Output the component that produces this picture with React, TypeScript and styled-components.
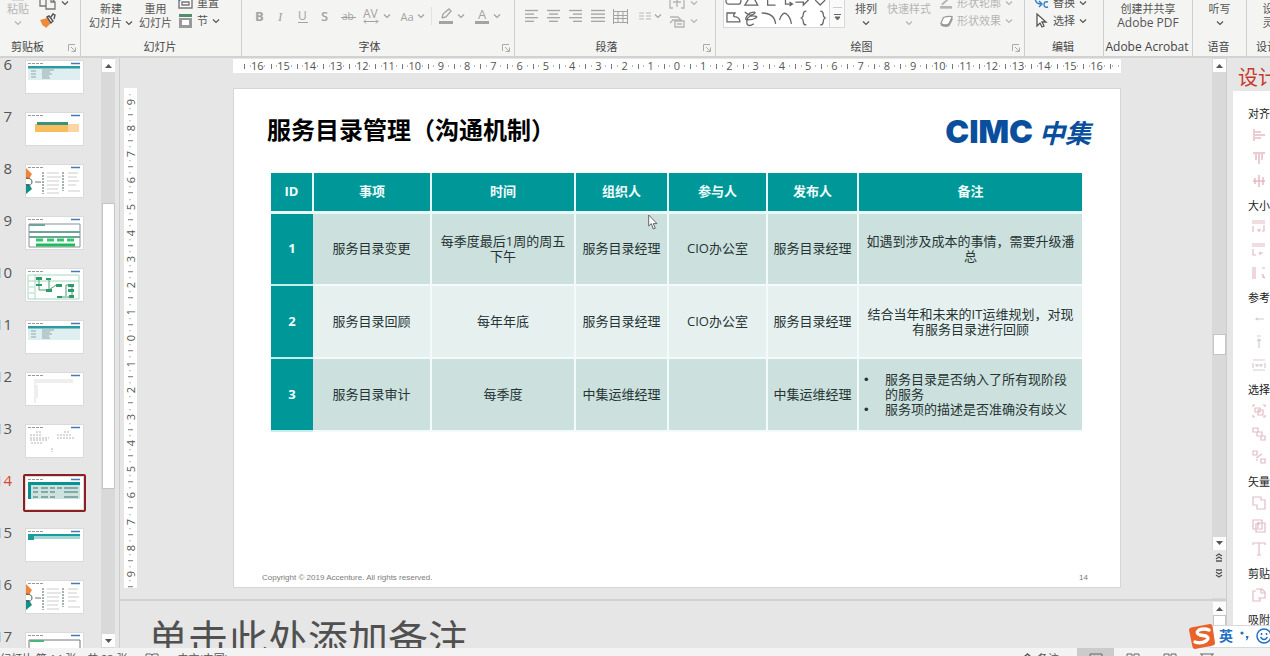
import React from "react";
import styled, { createGlobalStyle } from "styled-components";

const GlobalStyle = createGlobalStyle`
  * { box-sizing: border-box; }
  body {
    margin: 0;
    overflow: hidden;
    background: #e6e6e6;
    color: #444;
    font-family: "Open Sans", "Noto Sans CJK SC", sans-serif;
    font-size: 11px;
  }
  button {
    margin: 0; padding: 0; border: 0; background: none;
    color: inherit; font: inherit; cursor: pointer;
  }
`;

const App = styled.div`
  display: flex;
  flex-direction: column;
  height: 100vh;
  overflow: hidden;
`;

/* ---------- Ribbon ---------- */

const Ribbon = styled.header`
  display: flex;
  flex: 0 0 58px;
  overflow: hidden;
  background: #f4f4f3;
  border-bottom: 2px solid #d2d2d2;
`;

const Group = styled.section<{ $w: number }>`
  display: flex;
  flex: 0 0 ${(p) => p.$w}px;
  flex-direction: column;
  justify-content: flex-end;
  height: 56px;
  border-right: 1px solid #cfcfcf;
`;

const GroupBody = styled.div<{ $gap?: number; $pad?: number; $center?: boolean }>`
  display: flex;
  align-items: flex-end;
  justify-content: ${(p) => (p.$center ? "center" : "flex-start")};
  gap: ${(p) => p.$gap ?? 0}px;
  height: 30px;
  padding-left: ${(p) => p.$pad ?? 0}px;
`;

const GroupLabel = styled.div<{ $shift?: number }>`
  display: flex;
  align-items: center;
  height: 18px;
  margin-top: 8px;
  line-height: 18px;
  text-align: center;
  white-space: nowrap;
  padding-right: 2px;
  font-size: 11px;
  color: #444;
  > span { flex: 1; padding-right: ${(p) => p.$shift ?? 0}px; }
`;

const GroupName = styled.span<{ $large?: boolean }>`
  font-size: ${(p) => (p.$large ? 12 : 11)}px;
`;

const BigButton = styled.button<{ $off?: boolean; $w?: number }>`
  display: flex;
  flex-direction: column;
  align-items: center;
  flex: 0 0 auto;
  min-width: ${(p) => p.$w ?? 0}px;
  line-height: 14px;
  white-space: nowrap;
  color: ${(p) => (p.$off ? "#b4b4b4" : "#555")};
  svg { flex: none; }
`;

const Line = styled.span<{ $large?: boolean }>`
  display: flex;
  align-items: center;
  justify-content: center;
  gap: 3px;
  height: 14px;
  font-size: ${(p) => (p.$large ? 12 : 11)}px;
`;

const Stack = styled.div<{ $h?: number }>`
  display: flex;
  flex-direction: column;
  align-items: flex-start;
  button { height: ${(p) => p.$h ?? 18}px; }
`;

const SmallButton = styled.button<{ $off?: boolean }>`
  display: flex;
  align-items: center;
  gap: 4px;
  line-height: 18px;
  white-space: nowrap;
  color: ${(p) => (p.$off ? "#b4b4b4" : "#555")};
`;

const FormatRow = styled.div`
  display: flex;
  align-items: center;
  height: 26px;
  align-self: flex-start;
  padding-top: 6px;
  color: #a3a3a3;
`;

const FormatButton = styled.button<{ $w: number }>`
  display: flex;
  align-items: center;
  justify-content: center;
  gap: 3px;
  width: ${(p) => p.$w}px;
  height: 20px;
`;

const Divider = styled.span`
  width: 1px;
  height: 18px;
  background: #e2e2e2;
`;

const Gallery = styled.div`
  display: flex;
  align-self: flex-start;
  height: 28px;
  width: 122px;
  background: #fff;
  border: 1px solid #d8d8d8;
  border-top: 0;
`;

const GalleryMore = styled.button`
  display: flex;
  align-items: flex-end;
  justify-content: center;
  width: 15px;
  border-left: 1px solid #d8d8d8 !important;
  background: #fafafa !important;
`;

const Chevron = () => (
  <svg width="8" height="6" viewBox="0 0 8 6" fill="none" stroke="currentColor" strokeWidth="1.2">
    <path d="M1 1.5 4 4.5 7 1.5" />
  </svg>
);

const Launcher = () => (
  <svg width="11" height="11" viewBox="0 0 11 11" fill="none" stroke="#aaa">
    <path d="M1.5 9V2.500H8M4 5l4 4M8.500 5.500V9.500H4.500" />
  </svg>
);

const AlignIcon = ({ rows }: { rows: [number, number][] }) => (
  <svg width="14" height="14" viewBox="0 0 14 14" stroke="currentColor" strokeWidth="1.3">
    {rows.map(([a, b], i) => (
      <path key={i} d={`M${a} ${1.5 + i * 3.6}H${b}`} />
    ))}
  </svg>
);

const ShapeGallery = () => (
  <svg width="106" height="27" viewBox="0 0 106 27" fill="none" stroke="#666" strokeWidth="1.3">
    <path d="M2 -3V1q0 3 3 3h10q2 0 2-3v-4M21 5h13L28-6zM44-3v8h8M62-3v7h6M66 2l3 2-3 2M72 2h8v3l6-6M92 0l5 5 5-5" />
    <path d="M3 13h8q-3 4 1 4 4 1 4 5H3zM21 12q5 5 9 2t-4-1q-7 7-2 7t8-2-3-2-6 6 7 2M38 13q13 0 14 11M56 20q3-9 7-6t5 10M83 11q-3 0-3 3t-2 4q2 1 2 4t3 3M97 11q3 0 3 3t2 4q-2 1-2 4t-3 3" />
  </svg>
);

function RibbonBar() {
  return (
    <Ribbon>
      <Group $w={81}>
        <GroupBody $pad={7} $gap={10}>
          <BigButton $off>
            <svg width="16" height="8" viewBox="0 0 16 8" fill="none" stroke="#bbb"><path d="M2 0v6h12V0" /></svg>
            <Line>粘贴</Line>
            <Line><Chevron /></Line>
          </BigButton>
          <Stack>
            <SmallButton aria-label="复制">
              <svg width="18" height="18" viewBox="0 0 18 18" fill="none" stroke="#777" strokeWidth="1.3"><path d="M1 2v10h6M7 4h5l4 4v7H7zM12 4v4h4" /></svg>
              <Chevron />
            </SmallButton>
            <SmallButton aria-label="格式刷">
              <svg width="18" height="16" viewBox="0 0 18 16"><path d="M1 7l7-2 4 5-5 5-2-2-1 0z" fill="#ed8b3b" /><path d="M8 4l2-1 4 5-2 2zM12 4l2-3 2 1-1 4" fill="#fff" stroke="#555" strokeWidth="1.4" /></svg>
            </SmallButton>
          </Stack>
        </GroupBody>
        <GroupLabel $shift={12}><GroupName>剪贴板</GroupName><Launcher /></GroupLabel>
      </Group>

      <Group $w={161}>
        <GroupBody $pad={8} $gap={6}>
          <BigButton><Line>新建</Line><Line>幻灯片 <Chevron /></Line></BigButton>
          <BigButton><Line>重用</Line><Line>幻灯片</Line></BigButton>
          <Stack>
            <SmallButton>
              <svg width="15" height="14" viewBox="0 0 15 14" fill="#fff" stroke="#777" strokeWidth="1.4"><path d="M1 3h13v9H1zM4 6h7v3H4z" /><path d="M1 5l3-3" stroke="#2f7fc9" /></svg>
              重置
            </SmallButton>
            <SmallButton>
              <svg width="15" height="16" viewBox="0 0 15 16"><path d="M1 1h13v3H1z" fill="#4f8f70" /><path d="M1 5h13v10H1z" fill="#999" /><path d="M4 7h7v5H4z" fill="#fff" /></svg>
              节 <Chevron />
            </SmallButton>
          </Stack>
        </GroupBody>
        <GroupLabel><GroupName>幻灯片</GroupName></GroupLabel>
      </Group>

      <Group $w={273}>
        <GroupBody $pad={6}>
          <FormatRow>
            <FormatButton $w={22} aria-label="加粗"><svg width="12" height="16"><text x="2" y="13" fontSize="13" fontWeight="700" fill="currentColor">B</text></svg></FormatButton>
            <FormatButton $w={22} aria-label="倾斜"><svg width="12" height="16"><text x="3" y="13" fontSize="13" fontStyle="italic" fontFamily="Liberation Serif" fill="currentColor">I</text></svg></FormatButton>
            <FormatButton $w={22} aria-label="下划线"><svg width="12" height="16"><text x="1" y="12" fontSize="12" fill="currentColor">U</text><path d="M1 14.500h10" stroke="currentColor" /></svg></FormatButton>
            <FormatButton $w={22} aria-label="阴影"><svg width="12" height="16"><text x="2" y="13" fontSize="13" fontWeight="600" fill="currentColor">S</text></svg></FormatButton>
            <FormatButton $w={24} aria-label="删除线"><svg width="15" height="16"><text x="1" y="12" fontSize="10" fill="currentColor">ab</text><path d="M0 9.500h15" stroke="currentColor" /></svg></FormatButton>
            <FormatButton $w={34} aria-label="字符间距"><svg width="17" height="18"><text x="0" y="11" fontSize="12" fill="currentColor">AV</text><path d="M1 14.500h14M3 12.500l-2 2 2 2M13 12.500l2 2-2 2" fill="none" stroke="currentColor" /></svg><Chevron /></FormatButton>
            <FormatButton $w={37} aria-label="更改大小写"><span>Aa</span><Chevron /></FormatButton>
            <Divider />
            <FormatButton $w={38} aria-label="突出显示"><svg width="16" height="18" fill="none" stroke="currentColor" strokeWidth="1.3"><path d="M4 11l1-4 6-5 2 2-5 6-4 1" /><path d="M1 15.500h14" strokeWidth="3" /></svg><Chevron /></FormatButton>
            <FormatButton $w={34} aria-label="字体颜色"><svg width="16" height="18"><text x="4" y="12" fontSize="13" fill="currentColor">A</text><path d="M1 15.500h14" stroke="currentColor" strokeWidth="3" /></svg><Chevron /></FormatButton>
          </FormatRow>
        </GroupBody>
        <GroupLabel $shift={4}><GroupName>字体</GroupName><Launcher /></GroupLabel>
      </Group>

      <Group $w={201}>
        <GroupBody $pad={6}>
          <FormatRow>
            <FormatButton $w={22} aria-label="左对齐"><AlignIcon rows={[[0, 13], [0, 9], [0, 13], [0, 9]]} /></FormatButton>
            <FormatButton $w={22} aria-label="居中"><AlignIcon rows={[[0, 13], [2, 11], [0, 13], [2, 11]]} /></FormatButton>
            <FormatButton $w={22} aria-label="右对齐"><AlignIcon rows={[[0, 13], [4, 13], [0, 13], [4, 13]]} /></FormatButton>
            <FormatButton $w={22} aria-label="两端对齐"><AlignIcon rows={[[0, 14], [0, 14], [0, 14], [0, 14]]} /></FormatButton>
            <FormatButton $w={22} aria-label="分散对齐"><svg width="15" height="15" fill="none" stroke="currentColor"><path d="M.5 0v15M14.500 0v15M1 2.500h13M1 6.500h13M1 9.500h13M1 13.500h13M5 2v11M10 2v11" /></svg></FormatButton>
            <FormatButton $w={38} aria-label="分栏"><svg width="12" height="10" stroke="#ccc" strokeWidth="1.3"><path d="M0 2h5M7 2h5M0 5h5M7 5h5M0 8h5M7 8h5" /></svg><Chevron /></FormatButton>
          </FormatRow>
          <Stack $h={18}>
            <SmallButton $off aria-label="对齐文本"><svg width="17" height="14" viewBox="0 0 17 14" fill="none" stroke="currentColor" strokeWidth="1.3"><path d="M4 1H1v11h3M12 1h3v11h-3M4 6h8M8 2v9" /></svg><Chevron /></SmallButton>
            <SmallButton $off aria-label="SmartArt"><svg width="17" height="16" viewBox="0 0 17 14" fill="none" stroke="currentColor" strokeWidth="1.4"><path d="M1 3h8l3 3H4L1 9M3 6h9M6 7h9v6H6zM8 10h5" /></svg><Chevron /></SmallButton>
          </Stack>
        </GroupBody>
        <GroupLabel $shift={4}><GroupName>段落</GroupName><Launcher /></GroupLabel>
      </Group>

      <Group $w={309}>
        <GroupBody $pad={7} $gap={9}>
          <Gallery>
            <ShapeGallery />
            <GalleryMore aria-label="更多形状">
              <svg width="9" height="20" viewBox="0 0 9 20" stroke="#666" fill="#666"><path d="M0 .5h9" stroke="#ccc" /><path d="M1 7.500h7M2 10h5l-2.500 3z" /></svg>
            </GalleryMore>
          </Gallery>
          <BigButton $w={24}><Line>排列</Line><Line><Chevron /></Line></BigButton>
          <BigButton $off><Line>快速样式</Line><Line><Chevron /></Line></BigButton>
          <Stack>
            <SmallButton $off><svg width="13" height="14" viewBox="0 0 15 14" fill="none" stroke="currentColor"><path d="M2 9l9-8" strokeWidth="2" /><path d="M0 12h14" strokeWidth="3" /></svg>形状轮廓 <Chevron /></SmallButton>
            <SmallButton $off><svg width="13" height="14" viewBox="0 0 15 14" fill="#fff" stroke="#999" strokeWidth="1.4"><path d="M1 10l3-7q5-2 10-1l-3 8q-5 3-10 0z" /><path d="M1 11q5 3 9 1l4-8" strokeWidth="2.400" fill="none" /></svg>形状效果 <Chevron /></SmallButton>
          </Stack>
        </GroupBody>
        <GroupLabel $shift={4}><GroupName>绘图</GroupName><Launcher /></GroupLabel>
      </Group>

      <Group $w={79}>
        <GroupBody $pad={9}>
          <Stack>
            <SmallButton><svg width="15" height="14" viewBox="0 0 15 14" fill="none" stroke="#2f7fc9" strokeWidth="1.4"><path d="M1 1q0 7 6 7M5 5l3 3-3 3M14 6q-4-1-4 2.500t4 2.500" /></svg>替换 <Chevron /></SmallButton>
            <SmallButton><svg width="15" height="16" viewBox="0 0 15 16" fill="#fff" stroke="#555" strokeWidth="1.3"><path d="M3 1v12l3-3 2 4 2-1-2-4h4z" /></svg>选择 <Chevron /></SmallButton>
          </Stack>
        </GroupBody>
        <GroupLabel><GroupName>编辑</GroupName></GroupLabel>
      </Group>

      <Group $w={89}>
        <GroupBody $center>
          <BigButton><Line>创建并共享</Line><Line $large>Adobe PDF</Line></BigButton>
        </GroupBody>
        <GroupLabel><GroupName $large>Adobe Acrobat</GroupName></GroupLabel>
      </Group>

      <Group $w={54}>
        <GroupBody $center>
          <BigButton><Line>听写</Line><Line><Chevron /></Line></BigButton>
        </GroupBody>
        <GroupLabel><GroupName>语音</GroupName></GroupLabel>
      </Group>

      <Group $w={54}>
        <GroupBody $center>
          <BigButton><Line>设计</Line><Line>灵感</Line></BigButton>
        </GroupBody>
        <GroupLabel><GroupName>设计器</GroupName></GroupLabel>
      </Group>
    </Ribbon>
  );
}

/* ---------- Scroll bars ---------- */

const Workspace = styled.div`
  display: flex;
  flex: 1;
  min-height: 0;
`;

const ScrollColumn = styled.div`
  display: flex;
  flex: 0 0 14px;
  flex-direction: column;
  align-items: center;
  padding: 1px 0;
  background: #d9d9d9;
`;

const ScrollArrow = styled.button`
  display: flex;
  align-items: center;
  justify-content: center;
  flex: 0 0 13px;
  width: 13px;
  background: #fdfdfd !important;
`;

const PlainArrow = styled(ScrollArrow)`
  flex-basis: 16px;
  width: 14px;
  background: #e6e6e6 !important;
`;

const Space = styled.div<{ $grow: number }>`
  flex: ${(p) => p.$grow} 1 0;
`;

const Handle = styled.div<{ $grow: number }>`
  flex: ${(p) => p.$grow} 1 0;
  width: 13px;
  background: #fff;
  border: 1px solid #c4c4c4;
`;

const Arrow = ({ down }: { down?: boolean }) => (
  <svg width="7" height="4" viewBox="0 0 7 4" fill="#555">
    <path d={down ? "M0 0h7L3.500 4z" : "M0 4h7L3.500 0z"} />
  </svg>
);

const DoubleArrow = ({ down }: { down?: boolean }) => (
  <svg width="8" height="9" viewBox="0 0 8 9" fill="none" stroke="#555" strokeWidth="1.4">
    <path d={down ? "M1 1h6M1 3l3 2 3-2M1 6l3 2 3-2" : "M1 3l3-2 3 2M1 6l3-2 3 2M1 8h6"} />
  </svg>
);

/* ---------- Slide thumbnails ---------- */

const Sidebar = styled.aside`
  display: flex;
  flex: 0 0 120px;
  border-right: 1px solid #cdcdcd;
  padding-right: 4px;
`;

const ThumbList = styled.ol`
  flex: 1;
  margin: 0;
  padding: 0;
  list-style: none;
  overflow: hidden;
`;

const ThumbItem = styled.li`
  display: flex;
  height: 52px;
  gap: 11px;
`;

const ThumbNumber = styled.span<{ $active?: boolean }>`
  display: flex;
  flex: 0 0 12px;
  min-width: 0;
  justify-content: flex-end;
  font-size: 15px;
  line-height: 13px;
  color: ${(p) => (p.$active ? "#d2492f" : "#555")};
`;

const ThumbFrame = styled.button<{ $active?: boolean }>`
  display: flex;
  height: ${(p) => (p.$active ? 38 : 34)}px;
  width: 63px;
  align-items: center;
  justify-content: center;
  margin-top: ${(p) => (p.$active ? 0 : 2)}px !important;
  border: ${(p) => (p.$active ? "2px solid #8c1f24" : "0")} !important;
  border-radius: 2px;
  svg { background: #fff; outline: 1px solid #dadada; }
`;

type Kind = "table" | "orange" | "diagram" | "green" | "flow" | "sparse" | "text" | "current" | "strip" | "partial";

function Thumb({ kind }: { kind: Kind }) {
  const art: Record<Kind, React.ReactNode> = {
    table: (
      <>
        <path d="M2 6h52v13H2z" fill="#dfeff1" />
        <path d="M2 5h52v2.500H2z" fill="#2a9ba0" />
        <path d="M16 9h12M16 11h8M16 13h10M16 15h7M16 17h8M5 10h5M5 13h5M5 16h5" stroke="#8fa5a8" />
      </>
    ),
    orange: (
      <>
        <path d="M9 11h44v8H9z" fill="#fbd6a4" />
        <path d="M9 11h33v8H9z" fill="#f8bd5e" />
        <path d="M11 9h31v3H11z" fill="#35947d" />
      </>
    ),
    diagram: (
      <>
        <path d="M0 3l6 6-3 5H0z" fill="#ee8638" />
        <path d="M0 19h3l3 5-6 5z" fill="#159087" />
        <path d="M0 13q6 0 6 4t-6 3" fill="none" stroke="#555" />
        <path d="M9 17h6" stroke="#777" />
        <path d="M17 7v22M37 7v19" stroke="#899" strokeDasharray="2 1" strokeWidth="1.500" />
        <path d="M21 8h12M21 12h14M21 16h12M21 20h12M21 24h11M21 28h12M42 8h10M42 12h9M42 16h11M42 20h8M42 26h12" stroke="#ccc" />
      </>
    ),
    green: (
      <>
        <path d="M3 7h51v23H3z" fill="none" stroke="#839398" />
        <path d="M3 7h16v2H3zM3 14h51v2H3zM3 19h51v2H3z" fill="#6da598" />
        <path d="M10 23h7M21 23h7M31 23h7M41 23h7" stroke="#2fc96a" strokeWidth="3" />
        <path d="M10 28h39" stroke="#24b85c" strokeWidth="3" />
      </>
    ),
    flow: (
      <>
        <path d="M2 6h51v24H2zM2 12h51M9 6v24M3 18h5M3 24h5" fill="none" stroke="#a6d8bd" />
        <path d="M13 9v12h10M23 9v12l7-5h5M40 27V16h6v12H33" fill="none" stroke="#4a9f75" />
        <path d="M10 8h6v3h-6zM10 15h6v2h-6zM20 9h5v2h-5zM20 20h6v3h-6zM30 15h6v3h-6zM42 15h6v3h-6zM42 20h6v3h-6zM31 27h5v2h-5zM43 26h5v3h-5z" fill="#2d9c68" />
      </>
    ),
    sparse: <path d="M8 7h39M8 9h39M9 10v20M11 12v13" stroke="#dedede" fill="none" />,
    text: <path d="M10 7h6M38 7h6M4 10h12M4 13h19M4 15h18M31 10h14M31 13h17M26 23v4M5 18h12" stroke="#b4b4b4" strokeDasharray="2 1" />,
    current: (
      <>
        <path d="M3 5h51v17H3z" fill="#cde1de" />
        <path d="M2 5h52v3H2zM2 5h3v17H2z" fill="#079393" />
        <path d="M7 11h5M15 11h7M24 11h5M31 11h5M38 11h14M7 15h5M15 15h7M24 15h5M38 15h14M7 20h5M15 20h7M24 20h5M38 20h14" stroke="#6c9896" strokeWidth="1.500" />
      </>
    ),
    strip: (
      <>
        <path d="M2 6h52v4H2z" fill="#a2d7d6" />
        <path d="M2 5h52v2H2zM2 7h6v4H2z" fill="#1a9d9b" />
      </>
    ),
    partial: (
      <>
        <path d="M3 7h51v23H3z" fill="none" stroke="#777" />
        <path d="M4 7h14v2H4z" fill="#49b67d" />
      </>
    ),
  };
  return (
    <svg width="57" height="32" viewBox="0 0 57 32">
      <path d="M2 2.500h16" stroke="#999" strokeDasharray="3 1" />
      <path d="M45 2.500h9" stroke="#4479b5" strokeWidth="1.500" />
      {art[kind]}
    </svg>
  );
}

const slides: [number, Kind][] = [
  [6, "table"], [7, "orange"], [8, "diagram"], [9, "green"], [10, "flow"], [11, "table"],
  [12, "sparse"], [13, "text"], [14, "current"], [15, "strip"], [16, "diagram"], [17, "partial"],
];

function SlideSidebar() {
  return (
    <Sidebar>
      <ThumbList>
        {slides.map(([n, kind]) => (
          <ThumbItem key={n}>
            <ThumbNumber $active={n === 14}>{n}</ThumbNumber>
            <ThumbFrame $active={n === 14} aria-label={`幻灯片 ${n}`}><Thumb kind={kind} /></ThumbFrame>
          </ThumbItem>
        ))}
      </ThumbList>
      <ScrollColumn>
        <ScrollArrow aria-label="向上"><Arrow /></ScrollArrow>
        <Space $grow={131} />
        <Handle $grow={285} />
        <Space $grow={146} />
        <ScrollArrow aria-label="向下"><Arrow down /></ScrollArrow>
      </ScrollColumn>
    </Sidebar>
  );
}

/* ---------- Editor ---------- */

const Editor = styled.main`
  display: flex;
  flex: 1;
  flex-direction: column;
  min-width: 0;
  border-right: 1px solid #cdcdcd;
`;

const CanvasRow = styled.div`
  display: flex;
  flex: 1;
  min-height: 0;
`;

const Canvas = styled.div`
  display: grid;
  flex: 1;
  grid-template-columns: 13px minmax(0, 1fr);
  grid-template-rows: 14px minmax(0, 1fr);
  column-gap: 96px;
  row-gap: 15px;
  padding: 1px 91px 11px 4px;
`;

const HRuler = styled.div`
  display: grid;
  grid-column: 2;
  grid-template-columns: 43fr repeat(33, 100fr) 43fr;
  background: #fff;
`;

const VRuler = styled.div`
  display: grid;
  grid-template-rows: 3fr repeat(19, 100fr) 3fr;
  background: #fff;
`;

const tick = "linear-gradient(#777, #777)";
const dot = "linear-gradient(#bbb, #bbb)";

const HCell = styled.span`
  display: flex;
  align-items: center;
  justify-content: center;
  min-width: 0;
  line-height: 14px;
  color: #555;
  background: ${tick} 0 50% / 1px 5px no-repeat, ${dot} 22% 50% / 1px 2px no-repeat, ${dot} 80% 50% / 1px 2px no-repeat;
`;

const VCell = styled.span`
  display: flex;
  align-items: center;
  justify-content: center;
  min-height: 0;
  line-height: 13px;
  color: #555;
  writing-mode: vertical-rl;
  transform: rotate(180deg);
  background: ${tick} 50% 0 / 5px 1px no-repeat, ${dot} 50% 22% / 2px 1px no-repeat, ${dot} 50% 80% / 2px 1px no-repeat;
`;

const Slide = styled.article`
  display: flex;
  flex-direction: column;
  min-width: 0;
  padding: 0 38px 0 37px;
  background: #fff;
  border: 1px solid #d6d6d6;
`;

const SlideHead = styled.div`
  display: flex;
  align-items: center;
  justify-content: space-between;
  height: 80px;
  margin: 0 -9px 4px -4px;
`;

const Title = styled.h1`
  margin: 0;
  font-size: 24px;
  line-height: 32px;
  font-weight: 700;
  color: #000;
  font-family: "Noto Sans CJK SC", sans-serif;
`;

const Logo = styled.div`
  display: flex;
  align-items: center;
  gap: 6px;
  padding-top: 6px;
  color: #0a4f9e;
  line-height: 32px;
`;

const LogoLatin = styled.span`
  font-family: Inter, sans-serif;
  font-size: 32px;
  font-weight: 900;
`;

const LogoHan = styled.span`
  font-family: "Noto Sans CJK SC", sans-serif;
  font-size: 26px;
  font-style: italic;
  font-weight: 700;
`;

const Plan = styled.table`
  width: 100%;
  table-layout: fixed;
  border-collapse: collapse;
  font-size: 13px;
  line-height: 15px;
  text-align: center;
  color: #263434;
`;

const HeadCell = styled.th`
  height: 39px;
  padding: 0;
  color: #f2ffff;
  background: #009798;
  border: solid #e6faf9;
  border-width: 0 2px 3px 0;
  &:last-child { border-right: 0; }
`;

const IdCell = styled.th`
  padding: 0;
  color: #f2ffff;
  background: #009798;
  border-bottom: 2px solid #c4eeec;
`;

const BodyRow = styled.tr<{ $light?: boolean }>`
  height: 73px;
  background: ${(p) => (p.$light ? "#e6f1ef" : "#cce0dd")};
`;

const Cell = styled.td`
  padding: 0 5px;
  border: solid #f3fbfa;
  border-width: 0 2px 2px 0;
  &:last-child { border-right: 0; }
`;

const Notes = styled.ul`
  margin: 0;
  padding: 0;
  list-style: none;
  text-align: left;
  li { display: flex; }
  li::before { content: "•"; flex: 0 0 21px; font-family: "Liberation Sans", sans-serif; }
`;

const SlideFoot = styled.footer`
  display: flex;
  justify-content: space-between;
  margin: auto -6px 3px -9px;
  font-family: "Liberation Sans", sans-serif;
  font-size: 8px;
  line-height: 12px;
  color: #7c7c7c;
`;

const NotesPane = styled.div`
  display: flex;
  flex: 0 0 49px;
  min-height: 0;
  height: 49px;
  overflow: hidden;
  border-top: 2px solid #d0d0d0;
`;

const NotesBox = styled.textarea`
  flex: 1;
  min-width: 0;
  height: 47px;
  padding: 6px 28px 0;
  border: 0;
  resize: none;
  overflow: hidden;
  background: #e6e6e6;
  font-family: "Noto Sans CJK SC", sans-serif;
  font-size: 40px;
  line-height: 60px;
  white-space: nowrap;
  &::placeholder { color: #505050; opacity: 1; }
`;

const NotesScroll = styled(ScrollColumn)`
  background: #e6e6e6;
`;

const columns = [
  ["ID", 42], ["事项", 118], ["时间", 144], ["组织人", 93], ["参与人", 99], ["发布人", 91], ["备注", 224],
] as const;

const rows: React.ReactNode[][] = [
  ["服务目录变更", "每季度最后1周的周五下午", "服务目录经理", "CIO办公室", "服务目录经理", "如遇到涉及成本的事情，需要升级潘总"],
  ["服务目录回顾", "每年年底", "服务目录经理", "CIO办公室", "服务目录经理", "结合当年和未来的IT运维规划，对现有服务目录进行回顾"],
  ["服务目录审计", "每季度", "中集运维经理", "", "中集运维经理",
    <Notes key="n"><li>服务目录是否纳入了所有现阶段的服务</li><li>服务项的描述是否准确没有歧义</li></Notes>],
];

function EditorPane() {
  const hs = Array.from({ length: 33 }, (_, i) => Math.abs(i - 16));
  const vs = Array.from({ length: 19 }, (_, i) => Math.abs(i - 9));
  return (
    <Editor>
      <CanvasRow>
        <Canvas>
          <HRuler><span />{hs.map((n, i) => <HCell key={i}>{n}</HCell>)}<HCell /></HRuler>
          <VRuler><span />{vs.map((n, i) => <VCell key={i}>{n}</VCell>)}</VRuler>
          <Slide>
            <SlideHead>
              <Title>服务目录管理（沟通机制）</Title>
              <Logo><LogoLatin>CIMC</LogoLatin><LogoHan>中集</LogoHan></Logo>
            </SlideHead>
            <Plan>
              <colgroup>{columns.map(([name, w]) => <col key={name} width={w} />)}</colgroup>
              <thead><tr>{columns.map(([name]) => <HeadCell key={name} scope="col">{name}</HeadCell>)}</tr></thead>
              <tbody>
                {rows.map((cells, r) => (
                  <BodyRow key={r} $light={r === 1}>
                    <IdCell scope="row">{r + 1}</IdCell>
                    {cells.map((c, i) => <Cell key={i}>{c}</Cell>)}
                  </BodyRow>
                ))}
              </tbody>
            </Plan>
            <SlideFoot><span>Copyright © 2019 Accenture. All rights reserved.</span><span>14</span></SlideFoot>
          </Slide>
        </Canvas>
        <ScrollColumn>
          <ScrollArrow aria-label="向上"><Arrow /></ScrollArrow>
          <Space $grow={274} />
          <Handle $grow={20} />
          <Space $grow={190} />
          <ScrollArrow aria-label="向下"><Arrow down /></ScrollArrow>
          <PlainArrow aria-label="上一张"><DoubleArrow /></PlainArrow>
          <PlainArrow aria-label="下一张"><DoubleArrow down /></PlainArrow>
          <PlainArrow as="span" />
        </ScrollColumn>
      </CanvasRow>
      <NotesPane>
        <NotesBox aria-label="备注" placeholder="单击此处添加备注" rows={1} />
        <NotesScroll>
          <ScrollArrow aria-label="向上"><Arrow /></ScrollArrow>
          <Handle $grow={1} />
          <Space $grow={2} />
        </NotesScroll>
      </NotesPane>
    </Editor>
  );
}

/* ---------- Design pane ---------- */

const DesignPane = styled.aside`
  display: flex;
  flex: 0 0 43px;
  flex-direction: column;
  padding-left: 6px;
  overflow: hidden;
`;

const PaneTitle = styled.h2`
  flex: 0 0 33px;
  height: 33px;
  min-height: 0;
  margin: 0;
  padding-left: 5px;
  font-size: 20px;
  font-weight: 400;
  line-height: 40px;
  color: #c9382c;
  white-space: nowrap;
`;

const PaneBody = styled.div`
  flex: 1 1 0;
  min-height: 0;
  padding: 14px 0 0 15px;
  background: #fff;
`;

const ToolGroup = styled.section`
  display: flex;
  flex-direction: column;
  align-items: flex-start;
  padding-bottom: 5px;
`;

const ToolTitle = styled.h3`
  margin: 0;
  font-size: 11px;
  font-weight: 400;
  line-height: 18px;
  color: #222;
  white-space: nowrap;
`;

const Tool = styled.button`
  display: flex;
  align-items: center;
  height: 23px;
  padding-left: 4px !important;
`;

const tools: [string, string[]][] = [
  ["对齐", ["M2 1v12M3 4h6M3 7h10M3 10h6", "M1 2h12M4 3v6M7 3v10M10 3v6", "M1 7h12M3 4v6M7 1v12M11 3v8"]],
  ["大小", ["M0 1h13M0 3h13M1 6v6M12 5v6h-2M7 9v3M5 10h4", "M0 1h13M0 3h13M1 6v6h3M8 9v3M7 10h4", "M1 1v12M3 1v12M10 2h3M11 8v4M10 9l3 3"]],
  ["参考", ["M4 7h8M6 6L4 7l2 1", "M5 1h4M7 4v9M5 6l2-2 2 2", "M1 2h12M1 12h12M1 5v5M13 5v5M3 7h8M5 6v3M9 6v3"]],
  ["选择", ["M1 3V1h2M11 1h2v2M1 11v2h2M11 13h2v-2M3 4h5v4H3zM6 6h5v5H6z", "M1 1h5v4H1zM5 5h5v4H5zM9 9h4v4H9z", "M1 1h4v4H1zM9 9h4v4H9zM4 8l6-4M6 10H4"]],
  ["矢量", ["M1 1h8v3h4v9H5v-4H1z", "M1 1h9v9H1zM5 4h8v9H4V5M3 5h5M6 3v6", "M1 3V1h12v2M7 1v12M5 13h4"]],
  ["剪贴", ["M4 1h6l3 3v6H6M4 3H1v10h7v-3M9 1v4h4"]],
  ["吸附", []],
];

function DesignTools() {
  return (
    <DesignPane>
      <PaneTitle>设计</PaneTitle>
      <PaneBody>
        {tools.map(([name, icons]) => (
          <ToolGroup key={name}>
            <ToolTitle>{name}</ToolTitle>
            {icons.map((d, i) => (
              <Tool key={d} aria-label={`${name} ${i + 1}`}>
                <svg width="14" height="14" viewBox="0 0 14 14" fill="none" stroke={name === "参考" ? "#d8cccf" : "#e3bcc4"} strokeWidth={name === "对齐" ? 1.500 : 1.200}><path d={d} /></svg>
              </Tool>
            ))}
          </ToolGroup>
        ))}
      </PaneBody>
    </DesignPane>
  );
}

/* ---------- Status bar ---------- */

const StatusBar = styled.footer`
  display: flex;
  flex: 0 0 8px;
  align-items: flex-start;
  justify-content: space-between;
  overflow: hidden;
  background: #f3f3f3;
  color: #555;
  line-height: 22px;
  white-space: nowrap;
`;

const StatusSide = styled.div<{ $right?: boolean }>`
  display: flex;
  align-items: center;
  height: 22px;
  gap: ${(p) => (p.$right ? 0 : 18)}px;
  padding-right: ${(p) => (p.$right ? 45 : 0)}px;
`;

const ViewButton = styled.button<{ $on?: boolean }>`
  display: flex;
  align-items: center;
  justify-content: center;
  width: 37px;
  height: 22px;
  background: ${(p) => (p.$on ? "#cbcbcb" : "none")} !important;
`;

const NotesToggle = styled.button`
  display: flex;
  align-items: center;
  gap: 5px;
  height: 22px;
  margin-right: 18px !important;
`;

const views = ["M1 1h12v10H1zM1 4h12M5 4v7", "M1 1h5v4H1zM8 1h5v4H8zM1 7h5v4H1zM8 7h5v4H8z", "M1 1h5v10H1zM8 1h5v10H8zM3 4h2M10 4h2", "M0 1h14M2 1v7h10V1M7 8v3"];

/* ---------- Input method bar and pointer ---------- */

const ImeBar = styled.div`
  position: absolute;
  right: 0;
  bottom: 7px;
  display: flex;
  align-items: center;
  width: 82px;
  height: 26px;
  color: #2170c4;
  > svg { z-index: 1; flex: none; }
`;

const ImeBody = styled.div`
  display: flex;
  flex: 1;
  align-items: center;
  gap: 7px;
  height: 23px;
  margin-left: -6px;
  padding-left: 8px;
  overflow: hidden;
  background: #fff;
  border: 1px solid #d8d8e0;
  border-right: 0;
  font-size: 14px;
  font-weight: 700;
  line-height: 20px;
  svg { flex: none; }
`;

const Pointer = styled.svg`
  position: absolute;
  left: 51%;
  top: 214px;
`;

export default function PresentationEditor() {
  return (
    <App>
      <GlobalStyle />
      <RibbonBar />
      <Workspace>
        <SlideSidebar />
        <EditorPane />
        <DesignTools />
      </Workspace>
      <StatusBar>
        <StatusSide>
          <span>幻灯片 第 14 张，共 23 张</span>
          <svg width="14" height="12" viewBox="0 0 14 12" fill="none" stroke="#666"><path d="M1 1h5l1 1 1-1h5v9H8l-1 1-1-1H1zM7 2v8" /></svg>
          <span>中文(中国)</span>
        </StatusSide>
        <StatusSide $right>
          <NotesToggle>
            <svg width="9" height="12" viewBox="0 0 9 12" fill="none" stroke="#555" strokeWidth="1.400"><path d="M1 4l3.500-3L8 4M1 7h7M1 10h7" /></svg>
            备注
          </NotesToggle>
          {views.map((d, i) => (
            <ViewButton key={d} $on={i === 0} aria-label={`视图 ${i + 1}`}>
              <svg width="14" height="12" viewBox="0 0 14 12" fill="none" stroke="#666"><path d={d} /></svg>
            </ViewButton>
          ))}
        </StatusSide>
      </StatusBar>
      <ImeBar>
        <svg width="28" height="27" viewBox="0 0 28 27">
          <path d="M3 4.500 22 1q2 0 2.500 2L27 20q0 2-2 2.500L7 26q-2 0-2.500-2L1 7q0-2 2-2.500z" fill="#e8622c" />
          <path d="M21 7q-5-2-10 0-4 3 1 5l6 1q4 2 0 5-5 3-11 1" fill="none" stroke="#fff" strokeWidth="3.400" strokeLinecap="round" />
        </svg>
        <ImeBody>
          <span>英</span>
          <svg width="9" height="10" viewBox="0 0 9 10" fill="#2170c4"><circle cx="2" cy="2" r="1.600" /><path d="M6 5h2.500q0 3-2 4.500l-.5-.5 1-2H6z" /></svg>
          <svg width="16" height="16" viewBox="0 0 16 16" fill="none" stroke="#2170c4" strokeWidth="1.500"><circle cx="8" cy="8" r="7" /><path d="M4.500 9q3.500 5 7 0M5.500 5v2M10.500 5v2" /></svg>
        </ImeBody>
      </ImeBar>
      <Pointer width="10" height="16" viewBox="0 0 10 16" fill="#fff" stroke="#666"><path d="M.7 1v11l2.600-2.400L5.300 15l2-.8-2-4.600H9z" /></Pointer>
    </App>
  );
}
